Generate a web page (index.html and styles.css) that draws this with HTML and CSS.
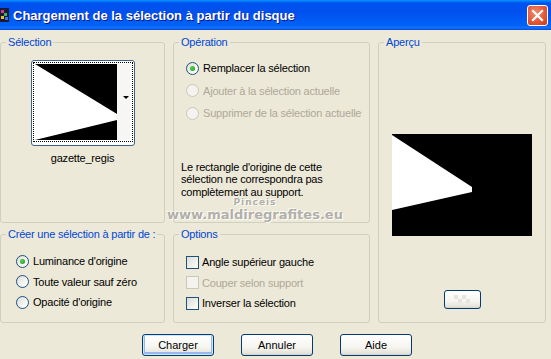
FILE: index.html
```html
<!DOCTYPE html>
<html>
<head>
	<title>Chargement de la sélection à partir du disque</title>
	<link rel="stylesheet" href="styles.css">
</head>
<body>
	<div class="window">
		<div class="titlebar">
			<svg class="app-icon" width="10" height="14" viewBox="0 0 10 14">
				<rect x="0" y="0" width="9" height="14" fill="#1a1a3a"/>
				<rect x="1" y="2" width="3" height="3" fill="#d83a8a"/>
				<rect x="4" y="5" width="3" height="3" fill="#3ac04a"/>
				<rect x="1" y="8" width="3" height="3" fill="#e8c020"/>
				<rect x="5" y="9" width="3" height="3" fill="#3a7ae0"/>
			</svg>
			<span class="title">Chargement de la sélection à partir du disque</span>
			<div class="close-btn">
				<svg width="13" height="13" viewBox="0 0 13 13">
					<path d="M2 2 L11 11 M11 2 L2 11" stroke="#fff" stroke-width="2.2" stroke-linecap="square"/>
				</svg>
			</div>
		</div>

		<div class="content">
			<fieldset class="group group-selection">
				<legend>Sélection</legend>
				<div class="thumb">
					<div class="thumb-focus">
						<svg width="95" height="76" viewBox="0 0 95 76">
							<rect x="0" y="0" width="82" height="76" fill="#fff"/>
							<polygon points="0,0 82,0 82,50" fill="#000"/>
							<polygon points="0,76 82,56 82,76" fill="#000"/>
							<rect x="82" y="0" width="13" height="76" fill="#f6f6f4"/>
							<polygon points="88,32 94,32 91,35" fill="#000"/>
						</svg>
					</div>
				</div>
				<div class="thumb-caption">gazette_regis</div>
			</fieldset>

			<fieldset class="group group-operation">
				<legend>Opération</legend>
				<div class="option-list op-list">
					<label class="option"><span class="radio checked"></span>Remplacer la sélection</label>
					<label class="option disabled"><span class="radio"></span>Ajouter à la sélection actuelle</label>
					<label class="option disabled"><span class="radio"></span>Supprimer de la sélection actuelle</label>
				</div>
				<p class="note">Le rectangle d'origine de cette<br>sélection ne correspondra pas<br>complètement au support.</p>
			</fieldset>

			<fieldset class="group group-preview">
				<legend>Aperçu</legend>
				<div class="preview">
					<svg width="140" height="102" viewBox="0 0 140 102">
						<rect x="0" y="0" width="140" height="102" fill="#000"/>
						<polygon points="0,1 80,53 80,58 0,76" fill="#fff"/>
					</svg>
				</div>
				<div class="preview-actions">
					<button class="btn btn-small">
						<svg width="20" height="10" viewBox="0 0 20 10">
							<rect x="2" y="0" width="4" height="4" fill="#e4e4e0"/>
							<rect x="10" y="0" width="4" height="4" fill="#e4e4e0"/>
							<rect x="6" y="4" width="4" height="4" fill="#e4e4e0"/>
							<rect x="14" y="4" width="4" height="4" fill="#e4e4e0"/>
						</svg>
					</button>
				</div>
			</fieldset>

			<fieldset class="group group-create">
				<legend>Créer une sélection à partir de :</legend>
				<div class="option-list create-list">
					<label class="option"><span class="radio checked"></span>Luminance d'origine</label>
					<label class="option"><span class="radio"></span>Toute valeur sauf zéro</label>
					<label class="option"><span class="radio"></span>Opacité d'origine</label>
				</div>
			</fieldset>

			<fieldset class="group group-options">
				<legend>Options</legend>
				<div class="option-list check-list">
					<label class="option"><span class="check"></span>Angle supérieur gauche</label>
					<label class="option disabled"><span class="check"></span>Couper selon support</label>
					<label class="option"><span class="check"></span>Inverser la sélection</label>
				</div>
			</fieldset>
		</div>

		<div class="buttons">
			<button class="btn btn-default">Charger</button>
			<button class="btn">Annuler</button>
			<button class="btn">Aide</button>
		</div>

		<div class="watermark">
			<div class="wm-small">Pinceis</div>
			<div class="wm-big">www.maldiregrafites.eu</div>
		</div>
	</div>
</body>
</html>
```

FILE: styles.css
```css
body {
	margin: 0;
	background-color: #ECE9D8;
	font-family: 'Liberation Sans', Arial, sans-serif;
	font-size: 11px;
	letter-spacing: -0.2px;
	color: #000;
}

.window {
	position: relative;
	width: 551px;
	height: 359px;
	overflow: hidden;
	background-color: #ECE9D8;
}

/* XP title bar */
.titlebar {
	height: 30px;
	display: flex;
	align-items: center;
	background: linear-gradient(180deg, #0997FF 0, #0053EE 10%, #0050EE 40%, #0063F8 85%, #1670F8 93%, #0048DD 100%);
	color: #fff;
	letter-spacing: 0;
}

.app-icon {
	flex: none;
}

.title {
	margin-left: 3px;
	font-weight: bold;
	font-size: 13px;
	text-shadow: 1px 1px #0A1883;
	white-space: nowrap;
}

.close-btn {
	margin-left: auto;
	margin-right: 3px;
	width: 19px;
	height: 19px;
	display: flex;
	align-items: center;
	justify-content: center;
	border: 1px solid #fff;
	border-radius: 3px;
	background: radial-gradient(circle at 40% 35%, #F08C6E 0, #E2593A 55%, #C93A18 100%);
}

/* dialog body */
.content {
	display: grid;
	grid-template-columns: 165px 197px 168px;
	grid-template-rows: 187px 95px;
	column-gap: 8px;
	row-gap: 5px;
	padding: 6px 5px 0 0;
}

.group {
	margin: 0;
	padding: 0;
	border: 1px solid #D0D0BF;
	border-radius: 3px;
	min-width: 0;
}

.group legend {
	color: #0046D5;
	margin-left: 5px;
	padding: 0 2px;
	line-height: 13px;
	white-space: nowrap;
}

.group-selection { grid-column: 1; grid-row: 1; }
.group-operation { grid-column: 2; grid-row: 1; }
.group-preview { grid-column: 3; grid-row: 1 / span 2; }
.group-create { grid-column: 1; grid-row: 2; }
.group-options { grid-column: 2; grid-row: 2; }

.group-selection {
	display: flex;
	flex-direction: column;
	align-items: center;
}

.thumb {
	margin-top: 11px;
	width: 100px;
	height: 82px;
	border: 1px solid #3D5F8C;
	border-radius: 3px;
	background-color: #fff;
	padding: 1px;
	box-sizing: content-box;
}

.thumb-focus {
	border: 1px dotted #000;
	padding: 1px;
	height: 76px;
}

.thumb-focus svg {
	display: block;
}

.thumb-caption {
	margin-top: 6px;
	line-height: 13px;
}

/* radios and checkboxes */
.option-list {
	display: flex;
	flex-direction: column;
}

.option {
	display: flex;
	align-items: center;
	gap: 4px;
	white-space: nowrap;
}

.option.disabled {
	color: #ACA899;
}

.op-list {
	margin-top: 8px;
	padding-left: 12px;
}

.op-list .option { height: 22.5px; }

.create-list {
	margin-top: 10px;
	padding-left: 15px;
}

.create-list .option { height: 20.5px; }

.check-list {
	margin-top: 11px;
	padding-left: 12px;
}

.check-list .option { height: 20.5px; gap: 3px; }

.radio {
	position: relative;
	width: 11px;
	height: 11px;
	border: 1px solid #1C5180;
	border-radius: 50%;
	background: linear-gradient(135deg, #DCDCD7 0, #F8F8F6 70%, #fff 100%);
	flex: none;
}

.radio.checked::after {
	content: '';
	position: absolute;
	left: 3px;
	top: 3px;
	width: 5px;
	height: 5px;
	border-radius: 50%;
	background: radial-gradient(circle at 40% 40%, #55D355 0, #21A121 80%);
}

.disabled .radio {
	border-color: #CAC8BB;
	background: #F4F3EE;
}

.check {
	width: 11px;
	height: 11px;
	border: 1px solid #1C5180;
	background: linear-gradient(135deg, #DCDCD7 0, #F4F4F0 70%, #fff 100%);
	flex: none;
}

.disabled .check {
	border-color: #CAC8BB;
	background: #F4F3EE;
}

.note {
	margin: 36px 0 0 7px;
	line-height: 12.5px;
}

/* preview */
.preview {
	margin-top: 85px;
	height: 102px;
}

.preview svg {
	display: block;
	margin: 0 auto;
}

.preview-actions {
	display: flex;
	justify-content: center;
	margin-top: 54px;
}

/* buttons */
.btn {
	font-family: 'Liberation Sans', Arial, sans-serif;
	font-size: 11px;
	color: #000;
	width: 72px;
	height: 22px;
	padding: 0;
	border: 1px solid #003C74;
	border-radius: 3px;
	background: linear-gradient(180deg, #FFFFFF 0, #F6F5F0 60%, #E6E4DA 90%, #D6D0C5 100%);
}

.btn-default {
	box-shadow: inset 0 0 0 1px #CEE7FF, inset 0 -1px 0 2px #98B8EA;
}

.btn-small {
	width: 37px;
	height: 19px;
	display: flex;
	align-items: center;
	justify-content: center;
}

.buttons {
	display: flex;
	gap: 27px;
	padding-left: 142px;
	margin-top: 11px;
}

/* overlay watermark */
.watermark {
	position: absolute;
	left: 160px;
	top: 197px;
	width: 190px;
	text-align: center;
	font-family: 'DejaVu Sans', sans-serif;
	font-weight: bold;
	color: rgba(135, 132, 122, 0.65);
	text-shadow: 1px 1px 0 rgba(255, 255, 255, 0.85), -1px -1px 0 rgba(255, 255, 255, 0.7);
	pointer-events: none;
	letter-spacing: 0;
}

.wm-small {
	font-size: 9px;
	line-height: 10px;
	letter-spacing: 1px;
}

.wm-big {
	font-size: 13px;
	line-height: 15px;
}
```
